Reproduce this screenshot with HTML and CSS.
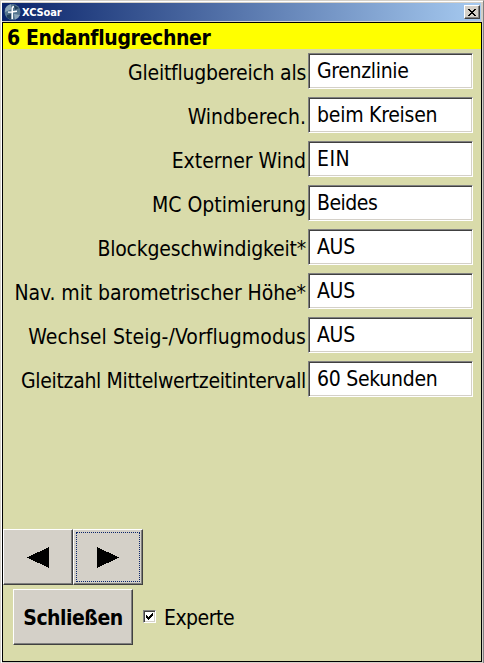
FILE: index.html
```html
<!DOCTYPE html>
<html lang="de">
<head>
<meta charset="utf-8">
<title>XCSoar</title>
<link rel="stylesheet" href="styles.css">
</head>
<body>
<div class="window">
  <header class="titlebar">
    <svg class="logo" width="18" height="18" viewBox="0 0 18 18">
      <circle cx="9.5" cy="9" r="8" fill="#55758f"/>
      <path d="M2.5 5A8 8 0 0 1 8 1.3v5.2L2 9zM11 11l6 1a8 8 0 0 1-5 4.500z" fill="#8da6b8"/>
      <path d="M4 12l4-1v5.500a8 8 0 0 1-4-2zM11 2l5 3-4 2z" fill="#23405d"/>
      <path d="M5 8.500h3.500V5q0-2.200 2.500-2v1.500q-1 0-1 1V8l4-.5v1.500l-4 .5V16H8.500V9.800H5z" fill="#fff"/>
    </svg>
    <span class="app-name">XCSoar</span>
    <button class="close" aria-label="Schließen"><svg width="8" height="7" viewBox="0 0 8 7" shape-rendering="crispEdges"><path d="M0 0h2v1h1v1h2V1h1V0h2v1H7v1H6v1H5v1h1v1h1v1h1v1H6V6H5V5H3v1H2v1H0V6h1V5h1V4h1V3H2V2H1V1H0z"/></svg></button>
  </header>
  <main class="dialog">
    <h1><span class="t-title">6 Endanflugrechner</span></h1>
    <div class="rows">
      <div class="row"><label><span class="l1">Gleitflugbereich als</span></label><div class="field"><span class="v1">Grenzlinie</span></div></div>
      <div class="row"><label><span class="l2">Windberech.</span></label><div class="field"><span class="v2">beim Kreisen</span></div></div>
      <div class="row"><label><span class="l3">Externer Wind</span></label><div class="field"><span class="v3">EIN</span></div></div>
      <div class="row"><label><span class="l4">MC Optimierung</span></label><div class="field"><span class="v4">Beides</span></div></div>
      <div class="row"><label><span class="l5">Blockgeschwindigkeit*</span></label><div class="field"><span class="v5">AUS</span></div></div>
      <div class="row"><label><span class="l6">Nav. mit barometrischer Höhe*</span></label><div class="field"><span class="v5">AUS</span></div></div>
      <div class="row"><label><span class="l7">Wechsel Steig-/Vorflugmodus</span></label><div class="field"><span class="v5">AUS</span></div></div>
      <div class="row"><label><span class="l8">Gleitzahl Mittelwertzeitintervall</span></label><div class="field"><span class="v8">60 Sekunden</span></div></div>
    </div>
    <div class="nav">
      <button class="button arrow" aria-label="Zurück"><svg width="22" height="21" viewBox="0 0 22 21" shape-rendering="crispEdges"><path d="M22 0v21L0 10.5z"/></svg></button>
      <button class="button arrow focused" aria-label="Weiter"><svg width="22" height="21" viewBox="0 0 22 21" shape-rendering="crispEdges"><path d="M0 0v21l22-10.5z"/></svg></button>
    </div>
    <div class="footer">
      <button class="button dismiss"><span class="t-close">Schließen</span></button>
      <div class="check"><span class="box"><svg width="7" height="7" viewBox="0 0 7 7" shape-rendering="crispEdges"><path d="M0 2h1v1h1v1h1V3h1V2h1V1h1V0h1v3H6v1H5v1H4v1H3v1H2V6H1V5H0z"/></svg></span><span class="t-expert">Experte</span></div>
    </div>
  </main>
</div>
</body>
</html>
```
FILE: styles.css
```css
* { box-sizing: border-box; }
body { margin: 0; font-family: "DejaVu Sans Condensed", "DejaVu Sans", sans-serif; font-stretch: condensed; color: #000; background: #d4d0c8; }
.window { width: 484px; height: 663px; border-top: 1px solid #d4d0c8; border-left: 1px solid #d4d0c8; border-right: 1px solid #808080; box-shadow: inset 1px 1px #fff; padding: 2px 1px 1px 1px; background: #d4d0c8; }
.titlebar { display: flex; align-items: center; width: 479px; height: 18px; margin-bottom: 1px; background: linear-gradient(90deg, #0a246a, #a6caf0); }
.logo { display: block; margin-left: 1px; flex: none; }
.app-name { margin-left: 1px; color: #fff; font: bold 11px/18px "DejaVu Sans Condensed", sans-serif; font-stretch: condensed; letter-spacing: -.1px; padding-top: 1px; flex: 1; }
.close { width: 16px; height: 14px; margin-right: 1px; padding: 0; display: flex; align-items: center; justify-content: center; background: #d4d0c8; border: 1px solid; border-color: #fff #404040 #404040 #fff; box-shadow: inset -1px -1px #808080; }
.dialog { width: 480px; height: 640px; border: 1px solid #000; background: #d9dbaa; display: flex; flex-direction: column; }
h1 { margin: 0; padding-left: 4px; height: 26px; background: #ff0; font-size: 21px; line-height: 30px; white-space: nowrap; flex: none; }
.rows { padding: 4px 8px 0 0; display: grid; row-gap: 8px; }
.row { display: flex; height: 36px; font-size: 21px; white-space: nowrap; }
label { width: 305px; padding-right: 2px; text-align: right; line-height: 41px; }
.field { width: 165px; height: 36px; padding: 1px 0 0 8px; line-height: 32px; background: #fff; border: 1px solid; border-color: #808080 #fff #fff #808080; box-shadow: inset 1px 1px #404040, inset -1px -1px #d4d0c8; }
.nav { display: flex; margin-top: auto; }
.button { height: 56px; padding: 0; display: flex; align-items: center; justify-content: center; background: #d4d0c8; color: #000; border: 1px solid; border-color: #fff #404040 #404040 #fff; box-shadow: inset -1px -1px #808080; font: bold 21px "DejaVu Sans Condensed", sans-serif; font-stretch: condensed; }
.arrow { width: 70px; }
.focused { outline: 1px dotted #0a246a; outline-offset: -4px; }
.footer { display: flex; margin: 4px 0 16px 10px; }
.dismiss { width: 120px; padding-top: 2px; }
.check { display: flex; align-items: center; margin-left: 10px; padding-bottom: 1px; font-size: 21px; }
.box { width: 13px; height: 13px; margin-right: 8px; display: flex; align-items: center; justify-content: center; background: #fff; border: 1px solid; border-color: #808080 #fff #fff #808080; box-shadow: inset 1px 1px #404040, inset -1px -1px #d4d0c8; }

/* Tracking per caption */
.t-title { letter-spacing: -.35px; }
.t-close { letter-spacing: -.5px; }
.t-expert { letter-spacing: -.5px; padding-top: 3px; }
.l1 { letter-spacing: -.25px; }
.l5 { letter-spacing: -.2px; }
.l6 { letter-spacing: -.07px; }
.l7 { letter-spacing: .07px; }
.l8 { letter-spacing: -.33px; }
.v1 { letter-spacing: -.33px; }
.v2 { letter-spacing: -.25px; }
.v3 { letter-spacing: .5px; }
.v4 { letter-spacing: -.5px; }
.v5 { letter-spacing: -.3px; }
.v8 { letter-spacing: -.27px; }
```
